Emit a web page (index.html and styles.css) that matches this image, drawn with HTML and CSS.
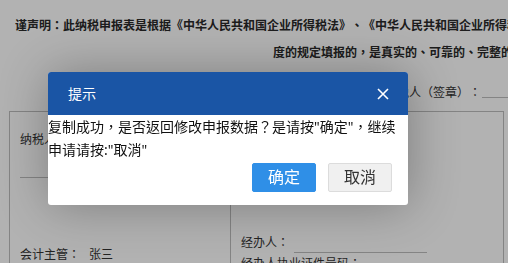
FILE: index.html
```html
<!DOCTYPE html>
<html lang="zh-Hant">
<head>
<meta charset="utf-8">
<title>提示</title>
<link rel="stylesheet" href="styles.css">
</head>
<body>
<div class="page">
  <p class="decl decl-1">谨声明：此纳税申报表是根据《中华人民共和国企业所得税法》、《中华人民共和国企业所得税法实施条例》以及有关税收政策和国家统一会计制</p>
  <p class="decl decl-2">度的规定填报的，是真实的、可靠的、完整的。</p>
  <div class="sign-row">
    <span class="sign-label">纳税人（签章）：</span>
    <span class="sign-line"></span>
  </div>
  <div class="form-table">
    <div class="cell cell-left">
      <div class="label label-top">纳税人公章：</div>
      <div class="underline"></div>
      <div class="label label-bottom">会计主管：<span class="value">张三</span></div>
    </div>
    <div class="cell cell-right">
      <div class="field-row">
        <span class="label">经办人：</span>
        <span class="field-input"></span>
      </div>
      <div class="label">经办人执业证件号码：</div>
    </div>
  </div>
</div>

<div class="mask"></div>

<div class="dialog">
  <div class="dialog-header">
    <span class="dialog-title">提示</span>
    <svg class="dialog-close" width="12" height="12" viewBox="0 0 12 12" aria-hidden="true">
      <path d="M1 1 L11 11 M11 1 L1 11" stroke="#fff" stroke-width="1.6" fill="none"/>
    </svg>
  </div>
  <div class="dialog-body">复制成功，是否返回修改申报数据？是请按"确定"，继续申请请按:"取消"</div>
  <div class="dialog-footer">
    <button class="btn btn-primary">确定</button>
    <button class="btn btn-default">取消</button>
  </div>
</div>
</body>
</html>
```
FILE: styles.css
```css
html, body {
  margin: 0;
  padding: 0;
  width: 508px;
  height: 263px;
  overflow: hidden;
  background: #fff;
  font-family: "Noto Sans", "Noto Sans CJK TC", sans-serif;
  color: #333;
  text-spacing-trim: space-all;
}

.page {
  padding-top: 12px;
}

.decl {
  margin: 0;
  font-size: 12px;
  line-height: 27px;
  white-space: nowrap;
  color: #2a2a2a;
}

.decl-1 {
  padding-left: 15px;
  font-weight: bold;
}

.decl-2 {
  padding-left: 273px;
  font-weight: bold;
}

.sign-row {
  display: flex;
  align-items: flex-start;
  height: 20px;
  margin-top: 17px;
  padding-left: 385px;
  white-space: nowrap;
}

.sign-label {
  font-size: 12px;
  line-height: 20px;
}

.sign-line {
  flex: none;
  width: 120px;
  height: 15px;
  margin-left: 1px;
  box-sizing: border-box;
  border-bottom: 1px solid #bdbdbd;
}

.form-table {
  display: flex;
  margin: 8px 0 0 9px;
  width: 495px;
  height: 200px;
  border: 1px solid #bdbdbd;
  border-bottom: none;
  box-sizing: border-box;
}

.cell {
  display: flex;
  flex-direction: column;
  padding: 0 10px;
  font-size: 12px;
}

.cell-left {
  width: 221px;
  box-sizing: border-box;
  border-right: 1px solid #bdbdbd;
}

.cell-right {
  flex: 1;
}

.label {
  line-height: 20px;
  white-space: nowrap;
}

.label-top {
  margin-top: 18px;
}

.underline {
  width: 175px;
  height: 27px;
  border-bottom: 1px solid #bdbdbd;
}

.label-bottom {
  margin-top: 67px;
}

.value {
  margin-left: 9px;
}

.field-row {
  display: flex;
  margin-top: 121px;
  margin-bottom: 1px;
}

.field-input {
  width: 133px;
  height: 20px;
  margin-left: 5px;
  box-sizing: border-box;
  border-bottom: 1px solid #bdbdbd;
}

.mask {
  position: fixed;
  inset: 0;
  background: rgba(0, 0, 0, 0.3);
}

.dialog {
  position: absolute;
  left: 48px;
  top: 72px;
  width: 360px;
  background: #fff;
  border-radius: 3px;
  box-shadow: 1px 1px 50px rgba(0, 0, 0, 0.3);
  overflow: hidden;
}

.dialog-header {
  display: flex;
  align-items: center;
  justify-content: space-between;
  height: 43px;
  padding: 0 19px 0 20px;
  background: #1a55a5;
}

.dialog-title {
  font-size: 14px;
  line-height: 43px;
  color: #fff;
}

.dialog-close {
  display: block;
}

.dialog-body {
  font-size: 14px;
  line-height: 23px;
  color: #111;
}

.dialog-footer {
  display: flex;
  justify-content: flex-end;
  gap: 12px;
  padding: 2px 16px 13px 0;
}

.btn {
  width: 64px;
  height: 29px;
  padding: 0;
  border-radius: 2px;
  font-family: inherit;
  font-size: 16px;
  line-height: 27px;
  cursor: pointer;
}

.btn-primary {
  background: #2f8fe7;
  border: 1px solid #2f8fe7;
  color: #fff;
}

.btn-default {
  background: #f0f0f0;
  border: 1px solid #dcdcdc;
  color: #333;
}
```
